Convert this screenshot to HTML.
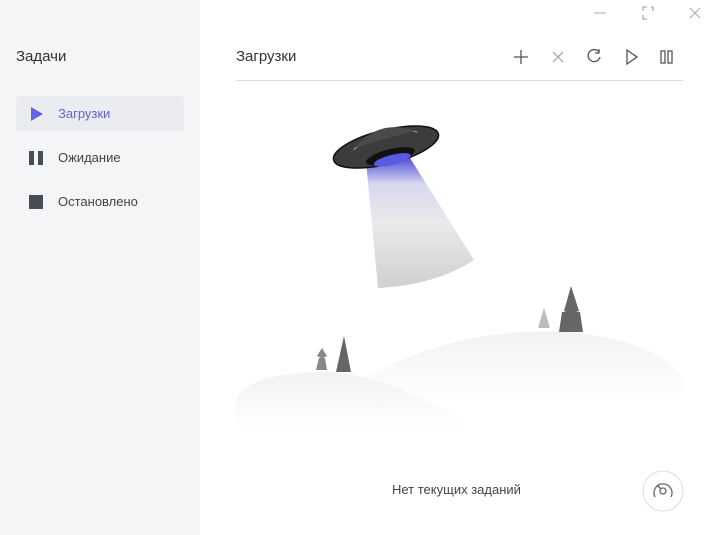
<!DOCTYPE html>
<html><head><meta charset="utf-8"><style>
body{margin:0;width:719px;height:535px;overflow:hidden;font-family:"Liberation Sans",sans-serif;background:#fff;position:relative}
.side{position:absolute;left:0;top:0;width:200px;height:535px;background:#f4f5f7}
.t{position:absolute;font-size:15px;color:#333}
.item{position:absolute;left:16px;width:168px;height:35px;font-size:13px;color:#444;line-height:35px}
.item span{position:absolute;left:42px}
</style></head><body>
<div class="side">
<div class="t" style="left:16px;top:48px">Задачи</div>
<div class="item" style="top:96px;background:#ebecf0;border-radius:3px;color:#6462d8">
<svg style="position:absolute;left:14px;top:11px" width="14" height="14"><path d="M1 0L13 7L1 14Z" fill="#6462e8"/></svg><span>Загрузки</span></div>
<div class="item" style="top:140px">
<svg style="position:absolute;left:13px;top:11px" width="14" height="14"><rect x="0" y="0" width="5" height="14" fill="#4a4c55"/><rect x="9" y="0" width="5" height="14" fill="#4a4c55"/></svg><span>Ожидание</span></div>
<div class="item" style="top:184px">
<svg style="position:absolute;left:13px;top:11px" width="14" height="14"><rect width="14" height="14" fill="#4a4c55"/></svg><span>Остановлено</span></div>
</div>
<svg style="position:absolute;left:590px;top:5px" width="125" height="20" stroke="#aaa" fill="none" stroke-width="1">
<path d="M4 8H16"/><path d="M53 6V2H57M53 10V14H57M61 2H63V6" stroke="#999"/><path d="M100 3L110 13M110 3L100 13"/></svg>
<div class="t" style="left:236px;top:48px">Загрузки</div>
<svg style="position:absolute;left:510px;top:46px" width="170" height="22" fill="none" stroke="#555" stroke-width="1.3">
<path d="M11 4V18M4 11H18"/><path d="M43 6L53 16M53 6L43 16" stroke="#aaa"/>
<path d="M89 6A6 6 0 1 0 90 11M89 3V7H85"/>
<path d="M117 4L127 11L117 18Z"/><rect x="151" y="5" width="4" height="12"/><rect x="158" y="5" width="4" height="12"/></svg>
<div style="position:absolute;left:236px;top:80px;width:447px;height:1px;background:#ddd"></div>
<svg style="position:absolute;left:236px;top:100px" width="447" height="340">
<defs>
<linearGradient id="b" x1="0" y1="0" x2="0" y2="1"><stop offset="0" stop-color="#5050d8"/><stop offset=".2" stop-color="#d8d8f0"/><stop offset=".5" stop-color="#eaeaea"/><stop offset="1" stop-color="#d0d0d0"/></linearGradient>
<linearGradient id="h" x1="0" y1="0" x2="0" y2="1"><stop offset="0" stop-color="#f2f2f2"/><stop offset="1" stop-color="#fff"/></linearGradient>
</defs>
<path d="M130 62L174 58L238 160Q200 185 142 188Z" fill="url(#b)"/>
<g transform="rotate(-14 150 47)">
<ellipse cx="150" cy="47" rx="54" ry="17" fill="#3c3c3c" stroke="#111" stroke-width="1.5"/>
<path d="M118 42Q150 22 184 40" fill="none" stroke="#888" stroke-width="1.5"/>
<path d="M120 40Q150 18 182 38" fill="#4a4a4a"/>
<ellipse cx="152" cy="57" rx="25" ry="7" fill="#111"/>
<ellipse cx="153" cy="61" rx="19" ry="5" fill="#5a5ae0"/>
</g>
<path d="M95 300Q200 225 330 232Q420 240 447 278V300Z" fill="url(#h)"/>
<path d="M0 300Q10 275 80 272Q150 270 240 330H0Z" fill="url(#h)"/>
<path d="M302 228L308 208L314 228Z" fill="#bbb"/>
<path d="M323 232L326 212H330L328 211L335 186L343 211L340 212H344L347 232Z" fill="#666"/>
<path d="M80 270L83 258H85L81 256L86 248L91 256L87 258H89L91 270Z" fill="#888"/>
<path d="M100 272L108 236L115 272Z" fill="#666"/>
</svg>
<div style="position:absolute;left:392px;top:482px;font-size:13px;color:#444">Нет текущих заданий</div>
<svg style="position:absolute;left:642px;top:470px" width="42" height="42" fill="none">
<circle cx="21" cy="21" r="20" stroke="#ddd"/>
<path d="M13 27A9 9 0 1 1 29 27" stroke="#666" stroke-width="1.3"/>
<circle cx="21" cy="21" r="3" stroke="#666" stroke-width="1.3"/><path d="M19 19L15 15" stroke="#666" stroke-width="1.3"/></svg>
</body></html>
